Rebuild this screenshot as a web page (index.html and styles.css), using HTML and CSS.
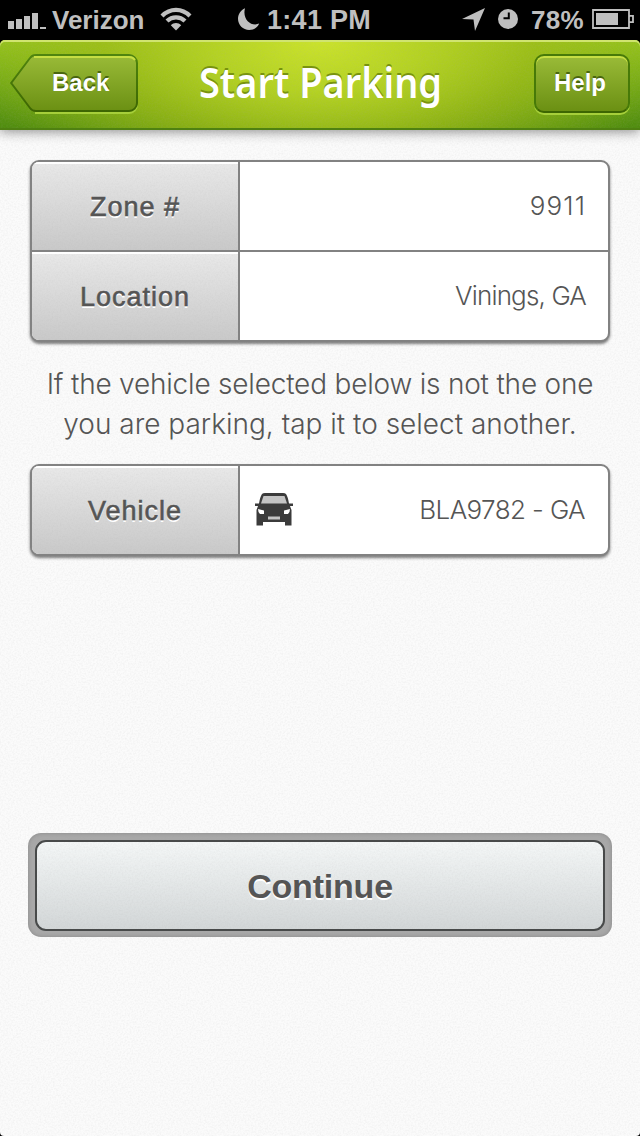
FILE: index.html
```html
<!DOCTYPE html>
<html lang="en">
<head>
<meta charset="utf-8">
<title>Start Parking</title>
<link rel="stylesheet" href="styles.css">
</head>
<body>
<div class="screen">
  <div class="status">
    <div class="status-left">
      <svg class="signal" width="38" height="16" viewBox="0 0 38 16"><path fill="#bfbfbf" d="M0 8h6v8H0zM8 6h6v10H8zM16 3h6v13h-6zM24 0h6v16h-6zM32 14h6v2h-6z"/></svg>
      <span class="carrier">Verizon</span>
      <svg class="wifi" width="32" height="24" viewBox="0 0 32 24"><g fill="none" stroke="#bfbfbf" stroke-width="4.200"><path d="M2 9C10 .8 22 .8 30 9"/><path d="M7 14.100C12 9.200 20 9.200 25 14.100"/></g><path fill="#bfbfbf" d="M10.800 18.200c3-2.800 7.400-2.800 10.400 0L16 23.400z"/></svg>
    </div>
    <div class="status-mid">
      <svg class="moon" width="22" height="22" viewBox="0 0 22 22"><path fill="#bfbfbf" d="M7 .2C2.800 2.200 0 6.200 0 10.800 0 17 5 22 11.200 22c4.600 0 8.400-2.600 10-6.400-8 3.400-17.200-4.400-14.200-15.400z"/></svg>
      <span class="time">1:41 PM</span>
    </div>
    <div class="status-right">
      <svg class="arrow" width="23" height="23" viewBox="0 0 23 23"><path fill="#bfbfbf" d="M23 0L13 23 11.500 11.500 0 11z"/></svg>
      <svg class="clock" width="20" height="20" viewBox="0 0 20 20"><circle cx="10" cy="10" r="10" fill="#bfbfbf"/><path d="M10.800 3.500v5.800H5.500" fill="none" stroke="#000" stroke-width="2"/></svg>
      <span class="percent">78%</span>
      <svg class="battery" width="42" height="20" viewBox="0 0 42 20"><path d="M1 1h36v18H1zM37 6.800h4v6.400h-4" fill="none" stroke="#bfbfbf" stroke-width="1.800"/><path fill="#bfbfbf" d="M4 4h22v12H4z"/></svg>
    </div>
  </div>
  <div class="header">
    <div class="back">
      <svg class="back-shape" width="130" height="62" viewBox="0 0 130 62">
        <defs>
          <linearGradient id="btn" x1="0" y1="0" x2="0" y2="1"><stop offset="0" stop-color="#9abb38"/><stop offset="1" stop-color="#6b9013"/></linearGradient>
          <linearGradient id="edge" x1="0" y1="0" x2="0" y2="1"><stop offset="0" stop-color="#4f850e"/><stop offset="1" stop-color="#3d6602"/></linearGradient>
        </defs>
        <path fill="none" stroke="#a6cf3a" stroke-width="2" d="M25 60H119a8 8 0 0 0 8-8"/>
        <path fill="url(#btn)" stroke="url(#edge)" stroke-width="2" d="M26 2H119a8 8 0 0 1 8 8V50a8 8 0 0 1-8 8H26Q22 58 20 55L1.500 30.500Q.8 30 1.500 29.500L20 5Q22 2 26 2z"/>
        <path fill="none" stroke="#c6de43" stroke-width="2" d="M24 4H119q4 0 6 3"/>
      </svg>
      <span class="back-label">Back</span>
    </div>
    <h1 class="title"><span class="title-text">Start Parking</span></h1>
    <div class="help">Help</div>
  </div>
  <div class="content">
    <div class="card">
      <div class="row"><div class="label">Zone #</div><div class="value"><span class="zone">9911</span></div></div>
      <div class="row"><div class="label">Location</div><div class="value"><span class="place">Vinings, GA</span></div></div>
    </div>
    <p class="hint"><span class="line-one">If the vehicle selected below is not the one</span><br><span class="line-two">you are parking, tap it to select another.</span></p>
    <div class="card">
      <div class="row"><div class="label">Vehicle</div><div class="value">
        <svg class="car" width="40" height="34" viewBox="0 0 40 34"><path fill="#3b3b3b" d="M8 1Q9 0 11 0H29Q31 0 32 1Q34 4 35 10.500H39V13H36L37.500 17V32.500H31V29H9V32.500H2.500V17L4 13H1V10.500H5Q6 4 8 1z"/><path fill="#c4c4c4" d="M9.500 3H30.500L33 10.500H7z"/><path fill="#fff" d="M4 16L10 17.500V21H6Q4 19.500 4 16zM36 16L30 17.500V21H34Q36 19.500 36 16z"/><path fill="#c4c4c4" d="M14 23.500H26V26.500H14z"/></svg>
        <span class="plate">BLA9782 - GA</span></div></div>
    </div>
    <div class="continue"><div class="continue-face"><span class="continue-text">Continue</span></div></div>
  </div>
</div>
</body>
</html>
```
FILE: styles.css
```css
:root {
  --grain: url("data:image/svg+xml,%3Csvg xmlns='http://www.w3.org/2000/svg' width='160' height='160'%3E%3Cfilter id='n'%3E%3CfeTurbulence type='fractalNoise' baseFrequency='.6' numOctaves='2' stitchTiles='stitch'/%3E%3CfeColorMatrix values='0 0 0 0 .4 0 0 0 0 .4 0 0 0 0 .4 .22 0 0 0 -.08'/%3E%3C/filter%3E%3Crect width='160' height='160' filter='url(%23n)'/%3E%3C/svg%3E");
  --light: Inter, "Liberation Sans", sans-serif;
  --bold: "Liberation Sans", Arial, sans-serif;
}
* { box-sizing: border-box; }
body { margin: 0; background: #000; }
.screen {
  width: 640px; height: 1136px; overflow: hidden;
  font-family: var(--bold); color: #555;
  background: #000;
  display: flex; flex-direction: column;
}
.status {
  height: 40px; flex: none; display: flex; align-items: center;
  color: #bfbfbf; font-weight: bold; font-size: 26px; line-height: 40px; white-space: nowrap;
}
.status-left { width: 237px; display: flex; align-items: center; padding-left: 8px; }
.signal { margin-top: 2px; }
.carrier { width: 93px; margin-left: 6px; }
.wifi { margin-left: 15px; margin-top: -2px; }
.status-mid { width: 225px; display: flex; align-items: center; }
.moon { margin: -2px 7px 0 1px; }
.time { font-size: 27px; letter-spacing: .3px; }
.status-right { width: 178px; display: flex; align-items: center; }
.arrow { margin-top: -1px; }
.clock { margin: -2px 13px 0 13px; }
.percent { width: 61px; letter-spacing: .3px; }
.battery { margin-top: -2px; }
.header {
  height: 90px; flex: none; z-index: 1; position: relative;
  display: flex; justify-content: space-between; padding: 13px 10px 0 10px;
  border-radius: 5px 5px 0 0;
  border-bottom: 2px solid #4f8111;
  background: var(--grain), radial-gradient(ellipse 360px 170px at 320px 0, #cbe32b 0%, #b4d222 30%, rgba(160,190,22,.75) 60%, rgba(147,193,24,0) 100%), linear-gradient(#93c41d, #4f8c0e);
  box-shadow: inset 0 2px #d0e470, 0 2px 12px rgba(0,0,0,.42);
}
.back { width: 130px; height: 62px; position: relative; }
.back-shape { display: block; }
.back-label {
  position: absolute; left: 42px; top: 16px; font-size: 24px; line-height: 28px; font-weight: bold;
  color: #fff; text-shadow: 0 -2px #49660f;
}
.title { margin: 0; width: 244px; height: 60px; margin-left: 59px; margin-right: auto; white-space: nowrap; }
.title-text {
  display: block; transform-origin: 0 0; transform: scaleX(.925);
  font: 600 41px/58px "Noto Sans", sans-serif; color: #fff; text-shadow: 0 -2px #78930f;
}
.help {
  width: 96px; height: 59px; margin-top: 1px; border: 2px solid #477a08; border-bottom-color: #3d6602;
  border-radius: 10px; background: linear-gradient(#9abb38, #6b9013);
  box-shadow: inset 0 2px #c6de43, 0 2px #a6cf3a;
  color: #fff; font-size: 24px; font-weight: bold; line-height: 54px; text-align: center; text-shadow: 0 -2px #49660f;
  padding-right: 4px;
}
.content {
  flex: 1; padding: 30px 28px 0;
  background: var(--grain), #fbfbfb; border-radius: 0 0 4px 4px;
}
.card {
  width: 580px; margin: 0 2px; border: 2px solid #828282; border-radius: 9px; overflow: hidden;
  background: #fff; box-shadow: 0 2px 3px rgba(0,0,0,.5);
}
.row { height: 88px; display: flex; }
.row + .row { height: 90px; border-top: 2px solid #828282; }
.label {
  width: 208px; border-right: 2px solid #828282; line-height: 91px; height: 88px; text-align: center;
  font-size: 27px; -webkit-text-stroke: .6px #555; letter-spacing: 1px; 
  text-shadow: 0 2px #fff; background: var(--grain), linear-gradient(#e9e9e9, #c9c9c9);
  box-shadow: inset 0 2px #fff;
}
.value {
  flex: 1; display: flex; align-items: center; padding: 0 23px 1px 14px;
  font: 300 26px/30px var(--light);
}
.value span { margin-left: auto; }
.value .zone { letter-spacing: 1.1px; margin-right: -1px; }
.value .place { letter-spacing: -.85px; margin-right: -1px; }
.value .plate { letter-spacing: -.6px; }
.hint { margin: 22px 0 20px; height: 80px; text-align: center; white-space: nowrap; font: 300 28px/40px var(--light); }
.line-one { letter-spacing: -.2px; }
.continue {
  width: 584px; height: 104px; margin-top: 277px; padding: 7px; border-radius: 13px;
  background: var(--grain), #a8a8a8; box-shadow: inset 0 0 4px #888;
}
.continue-face {
  height: 91px; border: 2px solid #484a4a; border-radius: 11px;
  background: var(--grain), linear-gradient(#f4f7f7, #d3d7d8);
  text-align: center; font-size: 34px; line-height: 88px; font-weight: bold; text-shadow: 0 2px #fff;
}
.continue-text { letter-spacing: -.2px; }
```
